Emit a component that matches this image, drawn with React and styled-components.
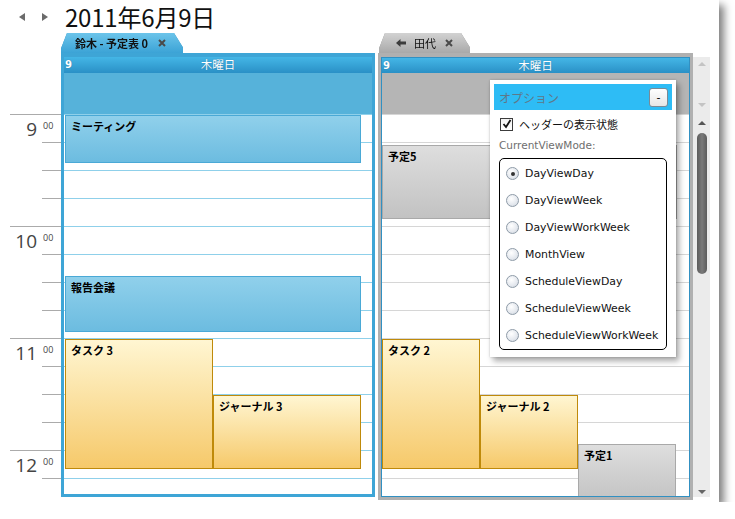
import React from 'react';
import styled, { createGlobalStyle } from 'styled-components';

const GlobalStyle = createGlobalStyle`
  html, body { margin: 0; padding: 0; background: #fff; }
  body { font-family: "Noto Sans CJK JP", "Noto Sans", sans-serif; }
  * { box-sizing: border-box; }
`;

const HOURS = [9, 10, 11, 12];
const VIEW_MODES = [
  'DayViewDay',
  'DayViewWeek',
  'DayViewWorkWeek',
  'MonthView',
  'ScheduleViewDay',
  'ScheduleViewWeek',
  'ScheduleViewWorkWeek'
];

// pixel positions inside the slot area (top of 9:00 = 0, 28px per 15 min)
const leftAppointments = [
  { title: 'ミーティング', kind: 'blue', left: 1, top: 1, width: 296, height: 48 },
  { title: '報告会議', kind: 'blue', left: 1, top: 162, width: 296, height: 56 },
  { title: 'タスク 3', kind: 'task', left: 1, top: 225, width: 148, height: 130 },
  { title: 'ジャーナル 3', kind: 'task', left: 149, top: 281, width: 148, height: 74 }
];

const rightAppointments = [
  { title: '予定5', kind: 'gray', left: 0, top: 31, width: 295, height: 74 },
  { title: 'タスク 2', kind: 'task', left: 0, top: 225, width: 98, height: 130 },
  { title: 'ジャーナル 2', kind: 'task', left: 98, top: 281, width: 98, height: 74 },
  { title: '予定1', kind: 'gray', left: 196, top: 330, width: 98, height: 60 }
];

const appointmentSkins = {
  blue: 'border: 1px solid #4aa9d6; background: linear-gradient(#90d0eb, #6cbce0);',
  task: 'border: 1px solid #bf8a0a; background: linear-gradient(#fff6d2, #f6c96a);',
  gray: 'border: 1px solid #a9a9a9; background: linear-gradient(#dedede, #c2c2c2);'
};

const Window = styled.div`
  position: relative;
  width: 719px;
  height: 502px;
  background: #fff;
  box-shadow: 5px 5px 8px rgba(0, 0, 0, 0.5);
  display: flex;
  flex-direction: column;
  overflow: hidden;
`;

const TopBar = styled.div`
  height: 33px;
  flex-shrink: 0;
  display: flex;
  align-items: center;
`;

const NavArrow = styled.span`
  width: 0;
  height: 0;
  margin-left: ${p => p.$ml}px;
  border-top: 4px solid transparent;
  border-bottom: 4px solid transparent;
  ${p => (p.$dir === 'left' ? 'border-right: 6px solid #6b6b6b;' : 'border-left: 6px solid #6b6b6b;')}
`;

const Title = styled.h1`
  margin: 0 0 0 17px;
  font-size: 24px;
  font-weight: 400;
  line-height: 30px;
  color: #111;
  letter-spacing: -0.2px;
`;

const Body = styled.div`
  flex: 1;
  min-height: 0;
  display: flex;
  align-items: flex-start;
`;

const Ruler = styled.div`
  width: 61px;
  flex-shrink: 0;
  padding-top: 81px;
  padding-left: 10px;
`;

const HourBlock = styled.div`
  display: grid;
  grid-template-columns: 32px 19px;
  height: 112px;
`;

const HourLabel = styled.div`
  border-top: 1px solid #ababab;
  text-align: right;
  padding: 5px 5px 0 0;
  font-family: "Open Sans", "Liberation Sans", sans-serif;
  font-size: 19px;
  line-height: 1;
  color: #444;
`;

const Ticks = styled.div`
  display: flex;
  flex-direction: column;
`;

const Quarter = styled.div`
  height: 28px;
  border-top: 1px solid #ababab;
  padding: 6px 0 0 1px;
  font-family: "Open Sans", "Liberation Sans", sans-serif;
  font-size: 9px;
  line-height: 1;
  color: #444;
`;

const Group = styled.div`
  width: ${p => p.$w}px;
  margin-left: ${p => p.$ml || 0}px;
  flex-shrink: 0;
  display: flex;
  flex-direction: column;
`;

const TabEdge = styled.div`
  width: ${p => p.$w}px;
  height: 20px;
  margin-left: ${p => p.$ml || 0}px;
  filter: drop-shadow(0 0 0.6px ${p => p.$edge});
`;

const TabFace = styled.div`
  height: 100%;
  clip-path: polygon(0 100%, 0 78%, 6px 0, calc(100% - 9px) 0, 100% 72%, 100% 100%);
  background: ${p => p.$bg};
  display: flex;
  align-items: center;
  gap: ${p => p.$gap}px;
  padding-left: ${p => p.$pl}px;
  font-size: 11px;
  font-weight: ${p => p.$weight};
  color: #111;
`;

const CloseX = styled.svg`
  width: 8px;
  height: 8px;
  margin-left: ${p => p.$ml}px;
`;

const BlueFrame = styled.div`
  height: 444px;
  border: 3px solid #3ea5d6;
  border-top-width: 4px;
  display: flex;
  flex-direction: column;
`;

const GrayFrame = styled.div`
  height: 447px;
  border: 3px solid #b0b0b0;
  border-top-width: 4px;
  display: flex;
  flex-direction: column;
`;

const GrayInner = styled.div`
  flex: 1;
  border: 1px solid #3190c2;
  display: flex;
  flex-direction: column;
  min-height: 0;
`;

const DayHeader = styled.div`
  height: ${p => p.$h}px;
  flex-shrink: 0;
  display: grid;
  grid-template-columns: 1fr auto 1fr;
  align-items: center;
  background: linear-gradient(#44b6e6, #2a90c6);
  color: #fff;
  font-size: 11.5px;
  line-height: 1;
  text-shadow: 0 0 1px rgba(0, 40, 80, 0.4);
`;

const DayNum = styled.span`
  font-weight: bold;
  padding-left: 1px;
  font-family: "DejaVu Sans", sans-serif;
  font-size: 10px;
`;

const AllDay = styled.div`
  height: 41px;
  flex-shrink: 0;
  background: ${p => p.$bg};
`;

const SlotArea = styled.div`
  position: relative;
  flex: 1;
  overflow: hidden;
  background: repeating-linear-gradient(to bottom, ${p => p.$line} 0 1px, #fff 1px 28px);
`;

const Appointment = styled.div`
  position: absolute;
  left: ${p => p.$left}px;
  top: ${p => p.$top}px;
  width: ${p => p.$width}px;
  height: ${p => p.$height}px;
  ${p => appointmentSkins[p.$kind]}
  padding: 2px 5px;
  font-size: 11px;
  font-weight: bold;
  line-height: 16px;
  color: #000;
`;

const ScrollCol = styled.div`
  width: 17px;
  flex-shrink: 0;
  margin-top: 24px;
  height: 440px;
  background: #ebebeb;
  display: flex;
  flex-direction: column;
`;

const MiniScroll = styled.div`
  height: 57px;
  display: flex;
  flex-direction: column;
  align-items: center;
  justify-content: space-between;
  padding: 5px 0 7px;
`;

const MainScroll = styled.div`
  flex: 1;
  display: flex;
  flex-direction: column;
  align-items: center;
  padding: 7px 0 3px;
`;

const ScrollArrow = styled.span`
  width: 0;
  height: 0;
  border-left: 4px solid transparent;
  border-right: 4px solid transparent;
  ${p => (p.$up ? `border-bottom: 4px solid ${p.$color};` : `border-top: 4px solid ${p.$color};`)}
  ${p => p.$push && 'margin-top: auto;'}
`;

const Thumb = styled.div`
  width: 10px;
  height: 141px;
  margin-top: 8px;
  border-radius: 5px;
  background: linear-gradient(to right, #5c5c5c, #7a7a7a 50%, #5c5c5c);
`;

const Panel = styled.div`
  position: absolute;
  left: 490px;
  top: 80px;
  width: 186px;
  height: 277px;
  padding: 4px;
  background: #fff;
  box-shadow: 3px 4px 6px rgba(0, 0, 0, 0.35), 0 0 2px rgba(0, 0, 0, 0.2);
  display: flex;
  flex-direction: column;
`;

const PanelHeader = styled.div`
  height: 26px;
  flex-shrink: 0;
  background: #2ebcf5;
  display: flex;
  align-items: center;
  justify-content: space-between;
  padding: 0 4px 0 5px;
  color: #5f7889;
  font-size: 12px;
`;

const CollapseButton = styled.button`
  width: 19px;
  height: 19px;
  padding: 0;
  border: 1px solid #7a8a96;
  border-radius: 3px;
  background: linear-gradient(#fff, #e6e6e6);
  font-family: "DejaVu Sans", sans-serif;
  font-size: 11px;
  line-height: 1;
  color: #000;
`;

const CheckRow = styled.label`
  margin: 7px 0 0 6px;
  height: 14px;
  display: flex;
  align-items: center;
  gap: 6px;
  font-size: 11px;
  color: #111;
`;

const CheckBox = styled.span`
  width: 13px;
  height: 13px;
  border: 1px solid #3c3c3c;
  background: linear-gradient(#f2f2f2, #fff);
  display: flex;
  align-items: center;
  justify-content: center;
`;

const FieldLabel = styled.div`
  margin: 7px 0 0 5px;
  height: 14px;
  font-family: "DejaVu Sans", sans-serif;
  font-size: 10.5px;
  line-height: 14px;
  color: #6e6e6e;
`;

const RadioBox = styled.div`
  margin: 6px 0 0 5px;
  width: 168px;
  border: 1px solid #000;
  border-radius: 5px;
  padding-top: 1px;
`;

const RadioRow = styled.div`
  height: 27px;
  display: flex;
  align-items: center;
  gap: 6px;
  padding-left: 6px;
  font-family: "DejaVu Sans", sans-serif;
  font-size: 10.9px;
  color: #111;
`;

const RadioDot = styled.span`
  width: 13px;
  height: 13px;
  flex-shrink: 0;
  border-radius: 50%;
  border: 1px solid #8e9ba8;
  background: radial-gradient(circle at 40% 35%, #fff, #e4e8ee 60%, #c9d0d8);
  display: flex;
  align-items: center;
  justify-content: center;
  &::after {
    content: '';
    width: 4px;
    height: 4px;
    border-radius: 50%;
    background: ${p => (p.$on ? '#333' : 'transparent')};
  }
`;

function XIcon({ ml }) {
  return (
    <CloseX $ml={ml} viewBox="0 0 8 8">
      <path d="M1 1 L7 7 M7 1 L1 7" stroke="#4a4a4a" strokeWidth="2" />
    </CloseX>
  );
}

function BackArrow() {
  return (
    <svg width="10" height="8" viewBox="0 0 10 8">
      <path d="M0 4 L4.5 0 L4.5 2.5 L10 2.5 L10 5.5 L4.5 5.5 L4.5 8 Z" fill="#3d3d3d" />
    </svg>
  );
}

function Slots({ appointments, line }) {
  return (
    <SlotArea $line={line}>
      {appointments.map(a => (
        <Appointment
          key={a.title}
          $kind={a.kind}
          $left={a.left}
          $top={a.top}
          $width={a.width}
          $height={a.height}
        >
          {a.title}
        </Appointment>
      ))}
    </SlotArea>
  );
}

function OptionsPanel() {
  return (
    <Panel>
      <PanelHeader>
        <span>オプション</span>
        <CollapseButton>-</CollapseButton>
      </PanelHeader>
      <CheckRow>
        <CheckBox>
          <svg width="10" height="10" viewBox="0 0 10 10">
            <path d="M1.5 5 L4 8 L8.5 1" fill="none" stroke="#111" strokeWidth="1.8" />
          </svg>
        </CheckBox>
        ヘッダーの表示状態
      </CheckRow>
      <FieldLabel>CurrentViewMode:</FieldLabel>
      <RadioBox>
        {VIEW_MODES.map((m, i) => (
          <RadioRow key={m}>
            <RadioDot $on={i === 0} />
            {m}
          </RadioRow>
        ))}
      </RadioBox>
    </Panel>
  );
}

export default function App() {
  return (
    <>
      <GlobalStyle />
      <Window>
        <TopBar>
          <NavArrow $dir="left" $ml={19} />
          <NavArrow $dir="right" $ml={17} />
          <Title>2011年6月9日</Title>
        </TopBar>
        <Body>
          <Ruler>
            {HOURS.map(h => (
              <HourBlock key={h}>
                <HourLabel>{h}</HourLabel>
                <Ticks>
                  <Quarter>00</Quarter>
                  <Quarter />
                  <Quarter />
                  <Quarter />
                </Ticks>
              </HourBlock>
            ))}
          </Ruler>

          <Group $w={314}>
            <TabEdge $w={122} $edge="#2c8dc0">
              <TabFace $bg="linear-gradient(#6cc4ea, #3ba3d6)" $pl={14} $gap={0} $weight={700}>
                鈴木 - 予定表 0
                <XIcon ml={10} />
              </TabFace>
            </TabEdge>
            <BlueFrame>
              <DayHeader $h={16}>
                <DayNum>9</DayNum>
                <span>木曜日</span>
                <span />
              </DayHeader>
              <AllDay $bg="#56b2da" />
              <Slots appointments={leftAppointments} line="#8fd0ea" />
            </BlueFrame>
          </Group>

          <Group $w={315} $ml={3}>
            <TabEdge $w={91} $ml={1} $edge="#8a8a8a">
              <TabFace $bg="linear-gradient(#d2d2d2, #a9a9a9)" $pl={17} $gap={8} $weight={400}>
                <BackArrow />
                田代
                <XIcon ml={1} />
              </TabFace>
            </TabEdge>
            <GrayFrame>
              <GrayInner>
                <DayHeader $h={15}>
                  <DayNum>9</DayNum>
                  <span>木曜日</span>
                  <span />
                </DayHeader>
                <AllDay $bg="#b5b5b5" />
                <Slots appointments={rightAppointments} line="#d6d6d6" />
              </GrayInner>
            </GrayFrame>
          </Group>

          <ScrollCol>
            <MiniScroll>
              <ScrollArrow $up $color="#c4c4c4" />
              <ScrollArrow $color="#c4c4c4" />
            </MiniScroll>
            <MainScroll>
              <ScrollArrow $up $color="#555" />
              <Thumb />
              <ScrollArrow $push $color="#666" />
            </MainScroll>
          </ScrollCol>
        </Body>
        <OptionsPanel />
      </Window>
    </>
  );
}
